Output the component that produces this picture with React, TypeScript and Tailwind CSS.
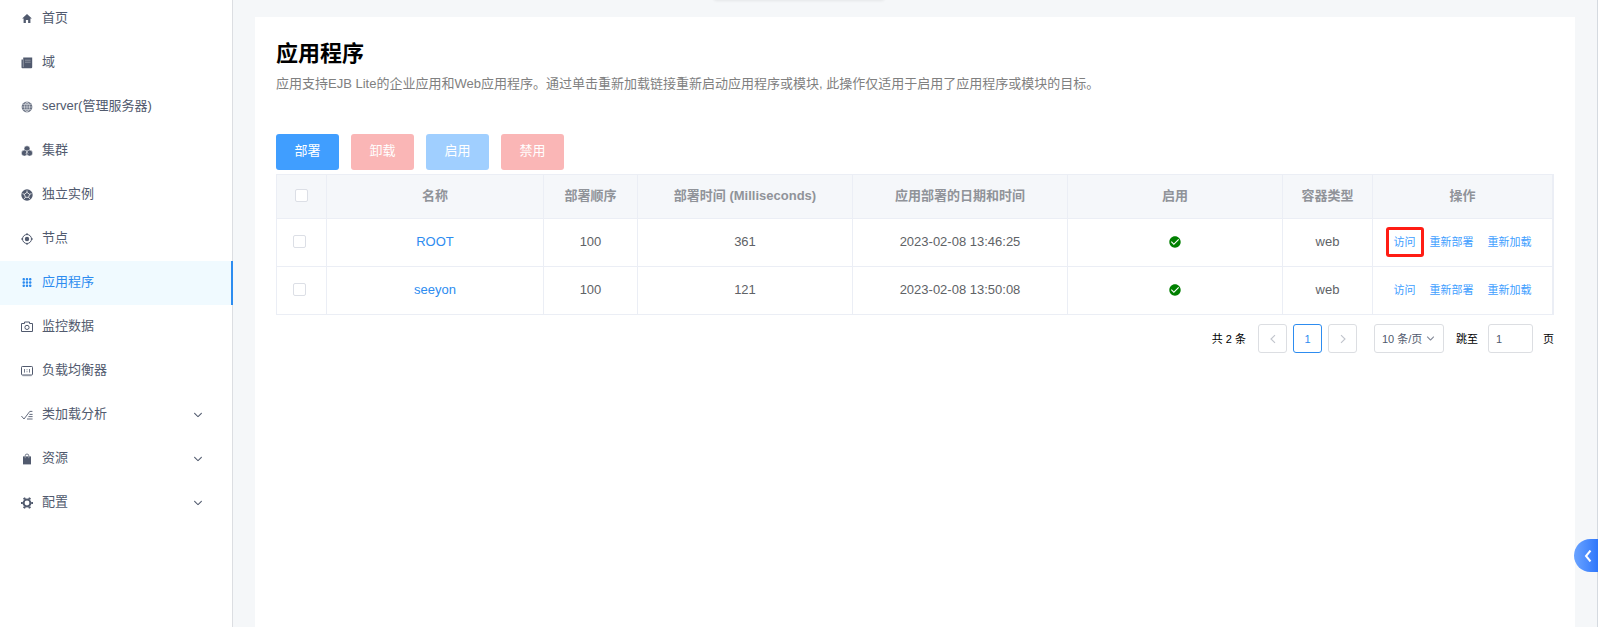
import { useState, type ReactNode } from 'react';
import { IoIosArrowDown, IoIosKeypad, IoMdCheckmarkCircle, IoMdHome } from 'react-icons/io';

function BookIcon() {
  return (
    <svg viewBox="0 0 12 12" className="size-3">
      <path d="M2.2.6h9v9.6a1 1 0 0 1-1 1H1.4a.9.9 0 0 1-.9-.9V2.4h1.7z" fill="currentColor" />
      <path d="M2.3 2.4v7.8M4 3.2h5.6M4 5.2h5.6" stroke="#fff" strokeWidth=".5" fill="none" opacity=".7" />
    </svg>
  );
}

function GlobeIcon() {
  return (
    <svg viewBox="0 0 12 12" className="size-3">
      <circle cx="6" cy="6" r="5.4" fill="currentColor" opacity=".85" />
      <path
        d="M6 .6v10.8M.6 6h10.8M1.6 3.3h8.8M1.6 8.7h8.8M6 .8C2.6 3.6 2.6 8.4 6 11.2M6 .8c3.4 2.8 3.4 7.6 0 10.4"
        stroke="#fff"
        strokeWidth=".5"
        fill="none"
      />
    </svg>
  );
}

function ClusterIcon() {
  return (
    <svg viewBox="0 0 12 12" className="size-3">
      <g fill="currentColor" stroke="#fff" strokeWidth=".5">
        <circle cx="6" cy="3.8" r="3" />
        <circle cx="3.4" cy="8.1" r="3" />
        <circle cx="8.6" cy="8.1" r="3" />
      </g>
      <path d="M6 5.2v2.2l1.5 1.2M6 7.4L4.5 8.6" stroke="#fff" strokeWidth=".5" fill="none" />
    </svg>
  );
}

function BallIcon() {
  return (
    <svg viewBox="0 0 12 12" className="size-3">
      <circle cx="6" cy="6" r="5.7" fill="currentColor" />
      <path
        d="M6 3.4L8.6 5.3 7.6 8.3H4.4L3.4 5.3zM6 3.4V1.5M8.6 5.3l1.9-.6M7.6 8.3l1.2 1.6M4.4 8.3L3.2 9.9M3.4 5.3l-1.9-.6"
        stroke="#fff"
        strokeWidth=".8"
        fill="none"
      />
    </svg>
  );
}

function TargetIcon() {
  return (
    <svg viewBox="0 0 12 12" className="size-3" fill="none" stroke="currentColor" strokeWidth="1">
      <circle cx="6" cy="6" r="4.5" />
      <circle cx="6" cy="6" r="2.2" fill="currentColor" stroke="none" />
      <path d="M6 0v2M6 10v2M0 6h2M10 6h2" />
    </svg>
  );
}

function GearIcon() {
  return (
    <svg viewBox="0 0 12 12" className="size-3" fill="none" stroke="currentColor">
      <circle cx="6" cy="6" r="3.4" strokeWidth="2" />
      <path
        d="M3.9 2.4L3 .8M8.1 2.4L9 .8M10.2 6H12M8.1 9.6l.9 1.6M3.9 9.6L3 11.2M1.8 6H0"
        strokeWidth="2.2"
      />
    </svg>
  );
}

function CameraIcon() {
  return (
    <svg viewBox="0 0 12 12" className="size-3" fill="none" stroke="currentColor" strokeWidth="1">
      <path d="M.5 2.5h3V1h5v1.5h3v8H.5z" />
      <circle cx="6" cy="6.4" r="2.1" />
    </svg>
  );
}

function BalancerIcon() {
  return (
    <svg viewBox="0 0 12 12" className="size-3" fill="none" stroke="currentColor" strokeWidth="1">
      <rect x=".5" y="1.5" width="11" height="8.5" rx=".8" />
      <path d="M3.5 4v3.6M8.5 4v3.6M6 4.3v.9M6 6.3v.9" strokeWidth=".8" />
      <path d="M1.5 10.8h9" strokeWidth=".6" opacity=".6" />
    </svg>
  );
}

function ChecklistIcon() {
  return (
    <svg viewBox="0 0 12 12" className="size-3" fill="none" stroke="currentColor">
      <path d="M.4 7l2.6 3L8.8 2.4h2.6" strokeWidth=".9" />
      <path d="M8.4 5.4h3.2M7.4 7.6h4.2M6 10h5.6" strokeWidth=".9" />
    </svg>
  );
}

function BagIcon() {
  return (
    <svg viewBox="0 0 12 12" className="size-3">
      <path d="M2 3.4h8v8H2z" fill="currentColor" />
      <path d="M4.2 3.6V2.8a1.8 1.8 0 0 1 3.6 0v.8" fill="none" stroke="currentColor" strokeWidth=".8" />
      <path d="M4.2 3.6v1.6M7.8 3.6v1.6" fill="none" stroke="#fff" strokeWidth=".4" />
    </svg>
  );
}

function Chevron({ direction }: { direction: 'left' | 'right' }) {
  return (
    <svg viewBox="0 0 10 10" className="size-[10px]" fill="none" stroke="currentColor" strokeWidth="1.1">
      <path d={direction === 'left' ? 'M7 1.2L3 5l4 3.8' : 'M3 1.2L7 5 3 8.8'} />
    </svg>
  );
}

type MenuItem = { label: string; icon: ReactNode; active?: boolean; expandable?: boolean };

const menu: MenuItem[] = [
  { label: '首页', icon: <IoMdHome /> },
  { label: '域', icon: <BookIcon /> },
  { label: 'server(管理服务器)', icon: <GlobeIcon /> },
  { label: '集群', icon: <ClusterIcon /> },
  { label: '独立实例', icon: <BallIcon /> },
  { label: '节点', icon: <TargetIcon /> },
  { label: '应用程序', icon: <IoIosKeypad />, active: true },
  { label: '监控数据', icon: <CameraIcon /> },
  { label: '负载均衡器', icon: <BalancerIcon /> },
  { label: '类加载分析', icon: <ChecklistIcon />, expandable: true },
  { label: '资源', icon: <BagIcon />, expandable: true },
  { label: '配置', icon: <GearIcon />, expandable: true },
];

const headers = ['名称', '部署顺序', '部署时间 (Milliseconds)', '应用部署的日期和时间', '启用', '容器类型', '操作'];

const apps = [
  { name: 'ROOT', order: 100, duration: 361, date: '2023-02-08 13:46:25', type: 'web', highlighted: true },
  { name: 'seeyon', order: 100, duration: 121, date: '2023-02-08 13:50:08', type: 'web', highlighted: false },
];

const checkbox =
  'block size-[13px] appearance-none rounded-[2px] border border-[#dcdfe6] bg-white checked:border-[#409eff] checked:bg-[#409eff]';
const cell = 'border border-[#ebeef5] p-0 pb-[2px]';
const pageButton = 'flex h-[29px] w-[29px] items-center justify-center rounded-[3px] border bg-white';

function Sidebar() {
  return (
    <aside className="w-[233px] shrink-0 overflow-hidden bg-white shadow-[inset_-1px_0_#dcdee2]">
      <nav className="-mt-[3px]">
        <ul>
          {menu.map((item) => (
            <li key={item.label}>
              <a
                href="#"
                className={
                  item.active
                    ? 'flex h-11 items-center border-r-2 border-[#2d8cf0] bg-[#f0faff] pb-[2px] pl-[21px] text-[#2d8cf0]'
                    : 'flex h-11 items-center pb-[2px] pl-[21px] pr-[29px] text-[#515a6e]'
                }
              >
                <span className="mr-2 flex w-3 shrink-0 justify-center pt-px text-[13px]">{item.icon}</span>
                <span className="flex-1 pl-px">{item.label}</span>
                {item.expandable && <IoIosArrowDown className="mt-px text-[12px]" />}
              </a>
            </li>
          ))}
        </ul>
      </nav>
    </aside>
  );
}

function AppTable() {
  return (
    <div className="border-r border-[#ebeef5]">
      <table className="w-full table-fixed border-collapse text-center text-[#606266]">
        <colgroup>
          <col className="w-[50px]" />
          <col className="w-[217px]" />
          <col className="w-[94px]" />
          <col />
          <col />
          <col />
          <col className="w-[90px]" />
          <col className="w-[180px]" />
        </colgroup>
        <thead>
          <tr className="h-11 bg-[#f5f7fa] text-[#909399]">
            <th className={cell}>
              <input type="checkbox" aria-label="全选" className={`${checkbox} mx-auto`} />
            </th>
            {headers.map((h) => (
              <th key={h} className={`${cell} font-bold`}>
                {h}
              </th>
            ))}
          </tr>
        </thead>
        <tbody>
          {apps.map((app) => (
            <tr key={app.name} className="h-12">
              <td className={cell}>
                <input type="checkbox" aria-label={app.name} className={`${checkbox} ml-4`} />
              </td>
              <td className={cell}>
                <a href="#" className="text-[#2d8cf0]">
                  {app.name}
                </a>
              </td>
              <td className={cell}>{app.order}</td>
              <td className={cell}>{app.duration}</td>
              <td className={cell}>{app.date}</td>
              <td className={cell}>
                <IoMdCheckmarkCircle className="mx-auto text-[14px] text-[#008000]" />
              </td>
              <td className={cell}>{app.type}</td>
              <td className={cell}>
                <div className="flex items-center justify-center gap-[14px] text-[11px] text-[#409eff]">
                  <a href="#" className="relative">
                    访问
                    {app.highlighted && (
                      <span className="absolute -inset-x-2 -inset-y-[6px] rounded-[3px] border-3 border-[#ff1d14]" />
                    )}
                  </a>
                  <a href="#">重新部署</a>
                  <a href="#">重新加载</a>
                </div>
              </td>
            </tr>
          ))}
        </tbody>
      </table>
    </div>
  );
}

function Pagination() {
  const [page, setPage] = useState('1');
  return (
    <div className="mt-[9px] flex items-center justify-end text-[11px] text-black">
      <span className="mr-3">共 2 条</span>
      <div className="flex gap-[6px]">
        <button type="button" aria-label="上一页" className={`${pageButton} border-[#dcdee2] text-[#c0c4cc]`}>
          <Chevron direction="left" />
        </button>
        <button type="button" className={`${pageButton} border-[#2d8cf0] text-[#2d8cf0]`}>
          1
        </button>
        <button type="button" aria-label="下一页" className={`${pageButton} border-[#dcdee2] text-[#c0c4cc]`}>
          <Chevron direction="right" />
        </button>
      </div>
      <div className="relative ml-[17px]">
        <select
          aria-label="每页条数"
          className="block h-[29px] w-[70px] appearance-none rounded-[3px] border border-[#dcdee2] bg-white pl-[7px] text-[#515a6e]"
        >
          <option>10 条/页</option>
          <option>20 条/页</option>
        </select>
        <IoIosArrowDown className="pointer-events-none absolute right-2 top-[9px] text-[11px] text-[#808695]" />
      </div>
      <label htmlFor="jump" className="ml-3 mr-[10px]">
        跳至
      </label>
      <input
        id="jump"
        value={page}
        onChange={(e) => setPage(e.target.value)}
        className="h-[29px] w-[45px] rounded-[3px] border border-[#dcdee2] bg-white px-[7px] text-[#515a6e]"
      />
      <span className="ml-[10px]">页</span>
    </div>
  );
}

export default function App() {
  const action = 'h-9 w-[63px] rounded-[3px] pb-[3px] text-white';
  return (
    <div className='relative flex min-h-screen overflow-hidden bg-[#f5f7f9] font-["Liberation_Sans","Noto_Sans_CJK_SC",sans-serif] text-[13px] leading-[18px]'>
      <Sidebar />
      <div className="flex min-w-0 flex-1 flex-col border-r border-[#d5dae0] pl-[22px] pr-[22px] pt-[17px]">
        <main className="flex-1 bg-white px-[21px] pt-[22px]">
          <h1 className="text-[22px] font-bold leading-[30px] text-black">应用程序</h1>
          <p className="mt-[6px] text-[#808080]">
            应用支持EJB Lite的企业应用和Web应用程序。通过单击重新加载链接重新启动应用程序或模块, 此操作仅适用于启用了应用程序或模块的目标。
          </p>
          <div className="mb-1 mt-[41px] flex gap-3">
            <button type="button" className={`${action} bg-[#409eff]`}>
              部署
            </button>
            <button type="button" disabled className={`${action} bg-[#fab6b6]`}>
              卸载
            </button>
            <button type="button" disabled className={`${action} bg-[#a0cfff]`}>
              启用
            </button>
            <button type="button" disabled className={`${action} bg-[#fab6b6]`}>
              禁用
            </button>
          </div>
          <AppTable />
          <Pagination />
        </main>
      </div>
      <div className="absolute -top-2 left-1/2 h-2 w-[172px] -translate-x-[86px] rounded-md bg-white shadow-[0_1px_3px_rgba(0,0,0,0.07)]" />
      <button
        type="button"
        aria-label="展开"
        className="absolute right-0 top-[539px] flex h-[33px] w-6 items-center justify-end rounded-l-full bg-linear-to-r from-[#6aa3ff] to-[#2f77fb] pr-[6px] text-white"
      >
        <svg viewBox="0 0 8 12" className="h-3 w-2" fill="none" stroke="currentColor" strokeWidth="2">
          <path d="M6.5 .5L2 6l4.5 5.5" />
        </svg>
      </button>
    </div>
  );
}
